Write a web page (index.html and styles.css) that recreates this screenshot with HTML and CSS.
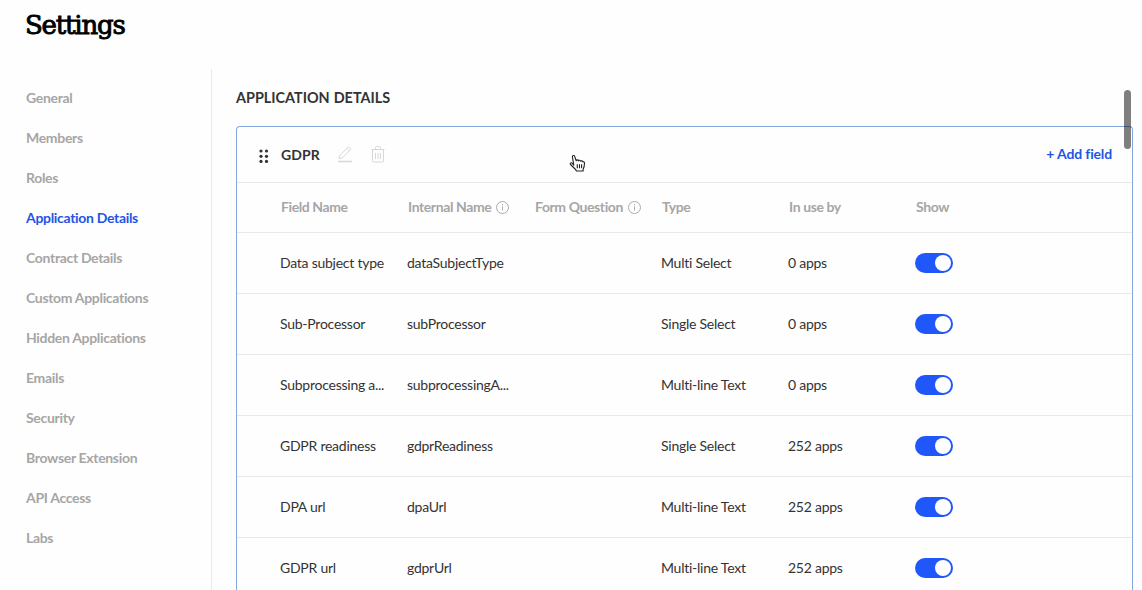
FILE: index.html
```html
<!DOCTYPE html>
<html lang="en">
<head>
    <meta charset="UTF-8">
    <meta name="viewport" content="width=device-width, initial-scale=1.0">
    <title>Settings</title>
    <link rel="stylesheet" href="styles.css">
</head>
<body>
    <header class="page-header">
        <h1>Settings</h1>
    </header>
    <div class="container">
        <nav class="sidebar">
            <a>General</a>
            <a>Members</a>
            <a>Roles</a>
            <a class="active">Application Details</a>
            <a>Contract Details</a>
            <a>Custom Applications</a>
            <a>Hidden Applications</a>
            <a>Emails</a>
            <a>Security</a>
            <a>Browser Extension</a>
            <a>API Access</a>
            <a>Labs</a>
        </nav>

        <main class="content">
            <h2>APPLICATION DETAILS</h2>
            <section class="card">
                <div class="card-header">
                    <svg class="drag" width="10" height="14" viewBox="0 0 10 14">
                        <circle cx="2" cy="2" r="1.6"/><circle cx="7.5" cy="2" r="1.6"/>
                        <circle cx="2" cy="7.3" r="1.6"/><circle cx="7.5" cy="7.3" r="1.6"/>
                        <circle cx="2" cy="12.4" r="1.6"/><circle cx="7.5" cy="12.4" r="1.6"/>
                    </svg>
                    <span class="card-title">GDPR</span>
                    <svg class="edit" width="16" height="17" viewBox="0 0 16 17">
                        <path d="M2 12.7l.8-3.4 8.3-8a1 1 0 0 1 1.4 0l1 1a1 1 0 0 1 0 1.400l-8.200 8.200zM10 2.500l2.400 2.400"/>
                        <path class="thick" d="M1 15.5h14"/>
                    </svg>
                    <svg class="trash" width="14" height="17" viewBox="0 0 14 17">
                        <path d="M.5 3.5h13M4.5 3.5V1.5a1 1 0 0 1 1-1h3a1 1 0 0 1 1 1v2M1.5 3.5v11.5a1 1 0 0 0 1 1h9a1 1 0 0 0 1-1V3.5M4.500 7v6M7 7v6M9.500 7v6"/>
                    </svg>
                    <a class="add-field">+ Add field</a>
                </div>
                <div class="row head">
                    <span>Field Name</span>
                    <span>Internal Name <svg class="info" width="13" height="13" viewBox="0 0 13 13"><circle cx="6.5" cy="6.5" r="6"/><path d="M6.5 5.5v4M6.5 3.2v1.2"/></svg></span>
                    <span>Form Question <svg class="info" width="13" height="13" viewBox="0 0 13 13"><circle cx="6.5" cy="6.5" r="6"/><path d="M6.5 5.5v4M6.5 3.2v1.2"/></svg></span>
                    <span>Type</span>
                    <span>In use by</span>
                    <span>Show</span>
                </div>
                <div class="row">
                    <span>Data subject type</span>
                    <span>dataSubjectType</span>
                    <span></span>
                    <span>Multi Select</span>
                    <span>0 apps</span>
                    <span class="toggle"></span>
                </div>
                <div class="row">
                    <span>Sub-Processor</span>
                    <span>subProcessor</span>
                    <span></span>
                    <span>Single Select</span>
                    <span>0 apps</span>
                    <span class="toggle"></span>
                </div>
                <div class="row">
                    <span>Subprocessing a...</span>
                    <span>subprocessingA...</span>
                    <span></span>
                    <span>Multi-line Text</span>
                    <span>0 apps</span>
                    <span class="toggle"></span>
                </div>
                <div class="row">
                    <span>GDPR readiness</span>
                    <span>gdprReadiness</span>
                    <span></span>
                    <span>Single Select</span>
                    <span>252 apps</span>
                    <span class="toggle"></span>
                </div>
                <div class="row">
                    <span>DPA url</span>
                    <span>dpaUrl</span>
                    <span></span>
                    <span>Multi-line Text</span>
                    <span>252 apps</span>
                    <span class="toggle"></span>
                </div>
                <div class="row">
                    <span>GDPR url</span>
                    <span>gdprUrl</span>
                    <span></span>
                    <span>Multi-line Text</span>
                    <span>252 apps</span>
                    <span class="toggle"></span>
                </div>
            </section>
        </main>
    </div>

    <div class="scroll-thumb"></div>
    <!-- Hand pointer -->
    <svg class="pointer" width="17" height="19" viewBox="0 0 17 19">
        <path d="M4.8 11.2L3.4 3c-.3-1.7 1.8-2.2 2.3-.5l1.5 4.3c.3-1.2 2-1.2 2.3.1.4-1 2-.8 2.3.4.5-.8 1.9-.5 2.1.6.9-.3 1.6.3 1.6 1.2 0 3-.3 4.3-1.4 6.3v1.6H7.3l-.5-1.3C5.2 14 3.5 12.5 1.6 10.5c-1-1.1.3-2.1 1.4-1.500z"/>
        <path d="M8.300 10.300v4M10.500 10.300v4M12.600 10.300v4"/>
    </svg>
</body>
</html>
```
FILE: styles.css
```css
:root {
    --primary-color: #1f55e6;
    --toggle-color: #2057fb;
    --text-color: #333;
    --muted-color: #a6a6a6;
    --line-color: #e9e9e9;
    --card-border: #83a6dc;
}
* {
    box-sizing: border-box;
}
body {
    margin: 0;
    height: 590px;
    overflow: hidden;
    font-family: 'Lato', sans-serif;
    font-size: 14px;
    line-height: 20px;
    letter-spacing: -0.25px;
    background-color: #fefefe;
    color: var(--text-color);
}
.page-header {
    height: 69px;
    padding: 8px 25px;
}
.page-header h1 {
    margin: 0;
    font-family: 'DejaVu Serif', serif;
    font-size: 26px;
    font-weight: 400;
    line-height: 34px;
    letter-spacing: -1.2px;
    color: #000;
    -webkit-text-stroke: 0.9px #000;
}
.container {
    display: flex;
    height: 521px;
}
.sidebar {
    display: flex;
    flex-direction: column;
    gap: 20px;
    flex: 0 0 212px;
    padding: 19px 0 0 26px;
    border-right: 1px solid var(--line-color);
}
.sidebar a {
    font-size: 14px;
    font-weight: 700;
    letter-spacing: -0.32px;
    color: var(--muted-color);
}
.sidebar a.active {
    color: var(--primary-color);
}
.content {
    display: flex;
    flex-direction: column;
    flex: 0 0 921px;
    padding: 19px 0 0 24px;
}
.content h2 {
    margin: 0 0 18px;
    font-size: 14px;
    font-weight: 700;
    line-height: 20px;
    letter-spacing: 0;
    word-spacing: 0.5px;
    font-size: 14.4px;
}
.card {
    flex: 1;
    min-height: 0;
    overflow: hidden;
    border: 1px solid var(--card-border);
    border-bottom: none;
    border-radius: 4px 4px 0 0;
}
.card-header {
    display: flex;
    align-items: center;
    height: 56px;
    padding: 0 20px 0 22px;
    border-bottom: 1px solid var(--line-color);
}
.drag {
    margin-top: 2px;
    fill: #333;
}
.card-title {
    margin: 0 17px 0 12px;
    font-weight: 700;
    letter-spacing: 0.1px;
}
.edit,
.trash {
    fill: none;
    stroke: #d8d8d8;
    stroke-width: 1;
}
.edit .thick {
    stroke-width: 1.5;
}
.trash {
    margin-left: 18px;
}
.add-field {
    margin: 0 0 2px auto;
    font-weight: 700;
    letter-spacing: -0.15px;
    color: var(--primary-color);
}
.row {
    display: grid;
    grid-template-columns: repeat(6, 127px);
    align-items: center;
    height: 61px;
    padding-left: 43px;
    border-bottom: 1px solid var(--line-color);
    white-space: nowrap;
}
.row.head {
    height: 50px;
    padding: 0 0 1px 44px;
    font-weight: 700;
    letter-spacing: -0.4px;
    color: var(--muted-color);
}
.head span {
    display: flex;
    align-items: center;
    gap: 5px;
}
.info {
    fill: none;
    stroke: #aaa;
}
.toggle {
    display: flex;
    justify-content: flex-end;
    width: 38px;
    height: 20px;
    padding: 2px;
    border-radius: 10px;
    background-color: var(--toggle-color);
}
.toggle::after {
    content: '';
    width: 16px;
    height: 16px;
    border-radius: 50%;
    background-color: #fff;
}
.scroll-thumb {
    position: absolute;
    left: 1124px;
    top: 90px;
    width: 7px;
    height: 59px;
    border-radius: 4px;
    background-color: rgba(0, 0, 0, 0.5);
}
.pointer {
    position: absolute;
    left: 569px;
    top: 154px;
    fill: #fff;
    stroke: #222;
    stroke-width: 1.1;
    stroke-linejoin: round;
}
```
